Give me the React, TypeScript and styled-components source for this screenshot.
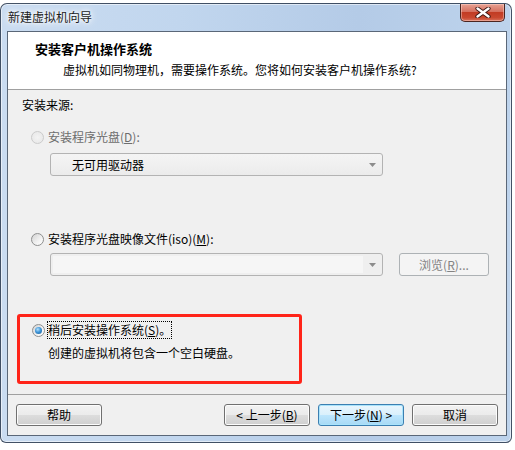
import React from "react";
import styled, { createGlobalStyle, css } from "styled-components";

const GlobalStyle = createGlobalStyle`
  html, body { margin: 0; padding: 0; background: #ffffff; }
  body {
    font-family: "Noto Sans CJK SC", "Noto Sans", sans-serif;
    font-size: 12px;
    color: #000;
  }
  * { box-sizing: border-box; }
`;

const Page = styled.div`
  width: 515px;
  height: 450px;
  overflow: hidden;
  background: #ffffff;
  padding-top: 3px;
`;

const Window = styled.div`
  width: 512px;
  height: 440px;
  border: 1px solid rgba(32, 46, 66, 0.8);
  border-radius: 7px 7px 6px 6px;
  padding: 0 4px 6px 6px;
  background: linear-gradient(to right, #cadcf1 0%, #c1d6ee 35%, #b4cbe7 70%, #bdd3ec 100%);
  box-shadow: inset 0 0 0 1px rgba(255, 255, 255, 0.55);
  display: flex;
  flex-direction: column;
`;

const TitleBar = styled.div`
  height: 27px;
  display: flex;
  align-items: flex-start;
  justify-content: space-between;
  padding-left: 1px;
`;

const TitleText = styled.div`
  margin-top: 5px;
  line-height: 16px;
  font-size: 12px;
  color: #1b1b1b;
  text-shadow: 0 0 6px #ffffff, 0 0 3px #ffffff, 0 0 10px rgba(255, 255, 255, 0.9);
`;

const CloseButton = styled.div`
  width: 45px;
  height: 18px;
  margin-right: 2px;
  border: 1px solid #4b2520;
  border-top: none;
  border-radius: 0 0 5px 5px;
  background: linear-gradient(#e8a293 0%, #d5705f 45%, #c23c24 50%, #c9482f 80%, #d8735e 100%);
  box-shadow: inset 0 0 0 1px rgba(255, 220, 210, 0.45);
  display: flex;
  align-items: center;
  justify-content: center;
`;

const Client = styled.div`
  flex: 1;
  border: 1px solid #5a6778;
  background: #f0f0f0;
  display: flex;
  flex-direction: column;
`;

const Header = styled.div`
  height: 58px;
  background: #ffffff;
  border-bottom: 1px solid #a0a0a0;
  padding: 9px 0 0 27px;
`;

const HeaderTitle = styled.div`
  font-size: 13px;
  font-weight: bold;
  line-height: 16px;
`;

const HeaderSub = styled.div`
  margin-top: 5px;
  padding-left: 28px;
  line-height: 16px;
`;

const Body = styled.div`
  flex: 1;
  padding: 7px 0 0 9px;
`;

const SectionLabel = styled.div`
  padding-left: 5px;
  line-height: 16px;
`;

const OptionRow = styled.div<{ $top: number }>`
  margin-top: ${(p) => p.$top}px;
  padding-left: 14px;
  height: 16px;
  display: flex;
  align-items: center;
  gap: 4px;
`;

const OptionLabel = styled.span<{ $disabled?: boolean; $focused?: boolean }>`
  line-height: 16px;
  color: ${(p) => (p.$disabled ? "#6d6d6d" : "#000")};
  ${(p) =>
    p.$focused &&
    css`
      outline: 1px dotted #000;
      outline-offset: 0px;
    `}
`;

const Mn = styled.span`
  text-decoration: underline;
  text-underline-offset: 1px;
`;

const Radio = styled.span<{ $state: "disabled" | "normal" | "checked" }>`
  position: relative;
  width: 13px;
  height: 13px;
  border-radius: 50%;
  flex: none;
  ${(p) =>
    p.$state === "disabled"
      ? css`
          border: 1px solid #cbcbcb;
          background: radial-gradient(circle at 50% 50%, #f3f3f3 0%, #e6e6e6 100%);
        `
      : css`
          border: 1px solid #8e8f8f;
          background: linear-gradient(135deg, #d2d2d2 0%, #f2f2f2 60%, #ffffff 100%);
        `}
  ${(p) =>
    p.$state === "checked" &&
    css`
      &::after {
        content: "";
        position: absolute;
        left: 2px;
        top: 2px;
        width: 7px;
        height: 7px;
        border-radius: 50%;
        background: radial-gradient(circle at 40% 35%, #b5e3ff 0%, #3f95d8 45%, #145c97 100%);
      }
    `}
`;

const ComboRow = styled.div<{ $top: number }>`
  margin-top: ${(p) => p.$top}px;
  padding-left: 33px;
  display: flex;
  gap: 16px;
`;

const Combo = styled.div<{ $empty?: boolean }>`
  width: 333px;
  height: 23px;
  border: 1px solid #b3b3b3;
  border-radius: 3px;
  background: ${(p) =>
    p.$empty ? "#efefef" : "linear-gradient(#f4f4f4 0%, #f0f0f0 50%, #ebebeb 100%)"};
  display: flex;
  align-items: stretch;
`;

const ComboField = styled.div<{ $empty?: boolean }>`
  flex: 1;
  padding-left: 21px;
  line-height: 21px;
  color: #000;
  ${(p) =>
    p.$empty &&
    css`
      margin: 2px 0 2px 2px;
      padding: 0;
      background: #f6f6f6;
    `}
`;

const ComboArrow = styled.div`
  width: 19px;
  display: flex;
  align-items: center;
  justify-content: center;
`;

const Button = styled.div<{ $variant?: "default" | "disabled" | "normal"; $w?: number }>`
  width: ${(p) => p.$w ?? 86}px;
  height: 22px;
  border-radius: 3px;
  display: flex;
  align-items: center;
  justify-content: center;
  line-height: 16px;
  ${(p) =>
    p.$variant === "default"
      ? css`
          border: 1px solid #3c7fb1;
          background: linear-gradient(#eaf6fd 0%, #d9f0fc 50%, #bee6fd 50%, #a7d9f5 100%);
          box-shadow: inset 0 0 0 1px #a9e3fb;
          color: #000;
        `
      : p.$variant === "disabled"
      ? css`
          border: 1px solid #adb2b5;
          background: #f4f4f4;
          color: #838383;
        `
      : css`
          border: 1px solid #707070;
          background: linear-gradient(#f2f2f2 0%, #ebebeb 50%, #dddddd 50%, #cfcfcf 100%);
          box-shadow: inset 0 0 0 1px #fcfcfc;
          color: #000;
        `}
`;

const BrowseButton = styled(Button)`
  height: 23px;
`;

const RedBox = styled.div`
  margin-top: 38px;
  width: 285px;
  height: 70px;
  border: 3px solid #ff2419;
  border-radius: 3px;
  padding-top: 5px;
`;

const BoxRow = styled.div`
  padding-left: 12px;
  height: 16px;
  display: flex;
  align-items: center;
  gap: 3px;
`;

const BoxDesc = styled.div`
  margin-top: 7px;
  padding-left: 28px;
  line-height: 16px;
`;

const Footer = styled.div`
  height: 41px;
  border-top: 1px solid #a0a0a0;
  padding: 9px 8px 0 8px;
  display: flex;
  justify-content: space-between;
  align-items: flex-start;
`;

const ButtonGroup = styled.div`
  display: flex;
  gap: 8px;
`;

const Arrow = () => (
  <svg width="7" height="4" viewBox="0 0 7 4">
    <path d="M0 0 H7 L3.5 4 Z" fill="#8c8c8c" />
  </svg>
);

const CloseGlyph = () => (
  <svg width="16" height="11" viewBox="0 0 16 11">
    <path d="M2.5 1.5 L13.5 9.5 M13.5 1.5 L2.5 9.5" stroke="#3a1410" strokeWidth="4.2" strokeLinecap="round" />
    <path d="M2.5 1.5 L13.5 9.5 M13.5 1.5 L2.5 9.5" stroke="#ffffff" strokeWidth="2.4" strokeLinecap="round" />
  </svg>
);

export default function App() {
  return (
    <>
      <GlobalStyle />
      <Page>
        <Window>
          <TitleBar>
            <TitleText>新建虚拟机向导</TitleText>
            <CloseButton>
              <CloseGlyph />
            </CloseButton>
          </TitleBar>
          <Client>
            <Header>
              <HeaderTitle>安装客户机操作系统</HeaderTitle>
              <HeaderSub>虚拟机如同物理机，需要操作系统。您将如何安装客户机操作系统?</HeaderSub>
            </Header>
            <Body>
              <SectionLabel>安装来源:</SectionLabel>
              <OptionRow $top={16}>
                <Radio $state="disabled" />
                <OptionLabel $disabled>
                  安装程序光盘(<Mn>D</Mn>):
                </OptionLabel>
              </OptionRow>
              <ComboRow $top={8}>
                <Combo>
                  <ComboField>无可用驱动器</ComboField>
                  <ComboArrow>
                    <Arrow />
                  </ComboArrow>
                </Combo>
              </ComboRow>
              <OptionRow $top={55}>
                <Radio $state="normal" />
                <OptionLabel>
                  安装程序光盘映像文件(iso)(<Mn>M</Mn>):
                </OptionLabel>
              </OptionRow>
              <ComboRow $top={6}>
                <Combo $empty>
                  <ComboField $empty />
                  <ComboArrow>
                    <Arrow />
                  </ComboArrow>
                </Combo>
                <BrowseButton $variant="disabled" $w={90}>
                  浏览(<Mn>R</Mn>)...
                </BrowseButton>
              </ComboRow>
              <RedBox>
                <BoxRow>
                  <Radio $state="checked" />
                  <OptionLabel $focused>
                    稍后安装操作系统(<Mn>S</Mn>)。
                  </OptionLabel>
                </BoxRow>
                <BoxDesc>创建的虚拟机将包含一个空白硬盘。</BoxDesc>
              </RedBox>
            </Body>
            <Footer>
              <Button>帮助</Button>
              <ButtonGroup>
                <Button>
                  &lt; 上一步(<Mn>B</Mn>)
                </Button>
                <Button $variant="default">
                  下一步(<Mn>N</Mn>) &gt;
                </Button>
                <Button>取消</Button>
              </ButtonGroup>
            </Footer>
          </Client>
        </Window>
      </Page>
    </>
  );
}
